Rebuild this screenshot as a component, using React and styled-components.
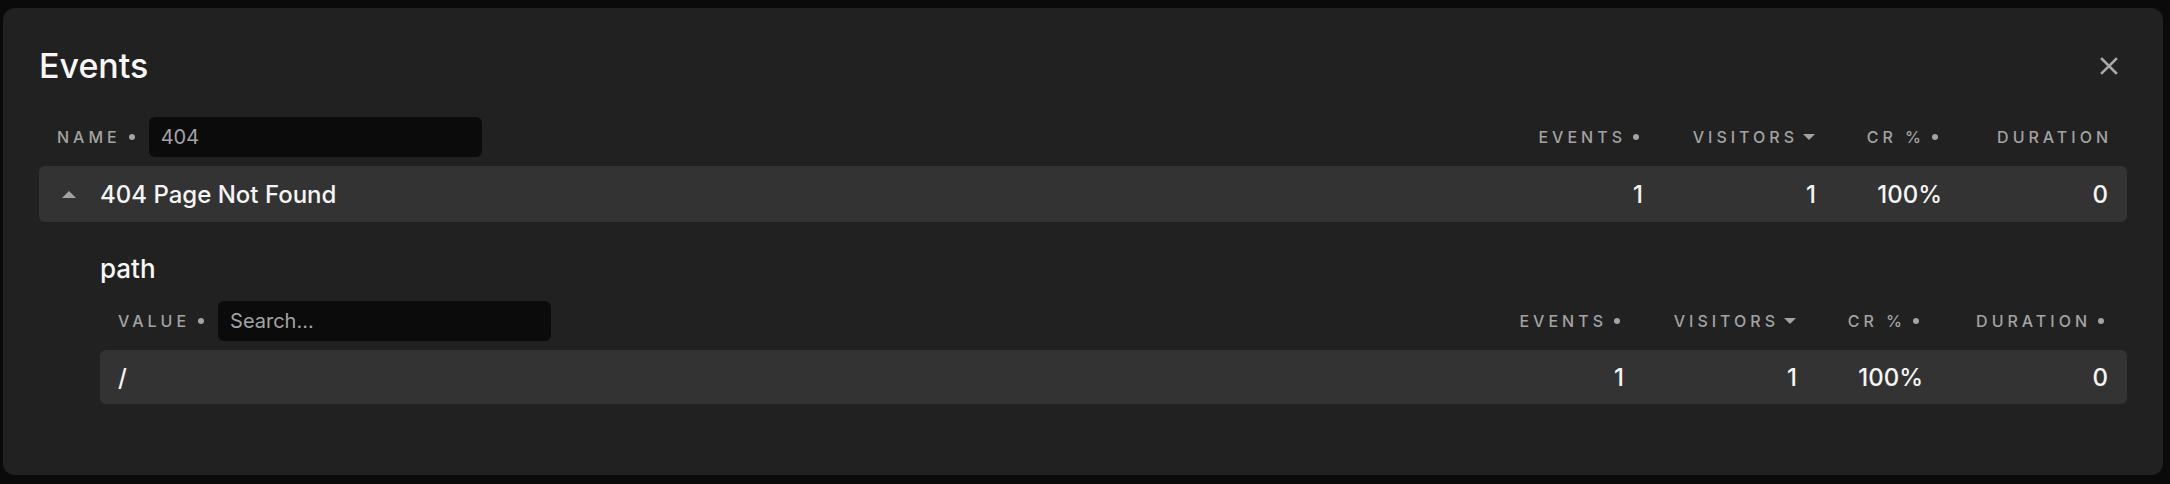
import React from "react";
import { styled, createGlobalStyle } from "styled-components";

const GlobalStyle = createGlobalStyle`
  html, body {
    margin: 0;
    background: #0a0a0a;
  }
  body {
    font-family: Inter, "Noto Sans", sans-serif;
    -webkit-font-smoothing: antialiased;
  }
`;

const TOP_COLS = "1fr 160px 173px 126px 166px";
const SUB_COLS = "1fr 160px 173px 126px 185px";

const columns = [
  { key: "events", label: "Events", mark: "dot" },
  { key: "visitors", label: "Visitors", mark: "sort" },
  { key: "cr", label: "CR %", mark: "dot" },
  { key: "duration", label: "Duration", mark: "dot" },
];

function CloseIcon() {
  return (
    <svg width="18" height="18" viewBox="0 0 18 18" fill="none">
      <path d="M2 2L16 16M16 2L2 16" stroke="currentColor" strokeWidth="2.6" strokeLinecap="square" />
    </svg>
  );
}

function SortIcon() {
  return (
    <svg width="12" height="6" viewBox="0 0 12 6">
      <polygon points="0,0 12,0 6,6" fill="currentColor" />
    </svg>
  );
}

function CaretUp() {
  return (
    <svg width="14" height="7" viewBox="0 0 14 7">
      <polygon points="0,7 14,7 7,0" fill="currentColor" />
    </svg>
  );
}

function HeadLabel({ label, mark }) {
  return (
    <HeadCell>
      <Caps>{label}</Caps>
      {mark === "dot" && <Dot />}
      {mark === "sort" && (
        <SortMark>
          <SortIcon />
        </SortMark>
      )}
    </HeadCell>
  );
}

function Table({ cols, filter, placeholder, value, rows, caret, hideLastDot }) {
  return (
    <div>
      <HeadRow $cols={cols}>
        <FilterGroup>
          <Caps>{filter}</Caps>
          <FilterDot />
          <SearchInput placeholder={placeholder} defaultValue={value} />
        </FilterGroup>
        {columns.map((c, i) => (
          <HeadLabel
            key={c.key}
            label={c.label}
            mark={hideLastDot && i === columns.length - 1 ? null : c.mark}
          />
        ))}
      </HeadRow>
      {rows.map((r) => (
        <DataRow key={r.name} $cols={cols} $caret={caret} $h={caret ? 56 : 54}>
          <NameCell>
            {caret && (
              <Caret>
                <CaretUp />
              </Caret>
            )}
            {r.name}
          </NameCell>
          <Num>{r.events}</Num>
          <Num>{r.visitors}</Num>
          <Num>{r.cr}</Num>
          <Num>{r.duration}</Num>
        </DataRow>
      ))}
    </div>
  );
}

export default function App() {
  const row = { name: "404 Page Not Found", events: 1, visitors: 1, cr: "100%", duration: 0 };
  const sub = { name: "/", events: 1, visitors: 1, cr: "100%", duration: 0 };
  return (
    <>
      <GlobalStyle />
      <Backdrop>
        <Modal>
          <TitleBar>
            <Title>Events</Title>
            <CloseButton aria-label="Close">
              <CloseIcon />
            </CloseButton>
          </TitleBar>
          <Section>
            <Table cols={TOP_COLS} filter="Name" value="404" rows={[row]} caret hideLastDot />
          </Section>
          <Breakdown>
            <BreakdownTitle>path</BreakdownTitle>
            <Table cols={SUB_COLS} filter="Value" placeholder="Search..." rows={[sub]} />
          </Breakdown>
        </Modal>
      </Backdrop>
    </>
  );
}

const Backdrop = styled.div`
  padding: 8px 7px 9px 3px;
`;

const Modal = styled.section`
  background: #212121;
  border-radius: 12px;
  padding: 38px 36px 71px;
`;

const TitleBar = styled.div`
  display: flex;
  align-items: center;
  justify-content: space-between;
  height: 40px;
`;

const Title = styled.h2`
  margin: 0;
  font-size: 34px;
  line-height: 40px;
  font-weight: 500;
  color: #f7f7f7;
`;

const CloseButton = styled.button`
  display: flex;
  background: none;
  border: 0;
  padding: 0;
  margin-right: 9px;
  color: #a8a8a8;
  cursor: pointer;
`;

const Section = styled.div`
  margin-top: 31px;
`;

const Breakdown = styled.div`
  margin: 31px 0 0 61px;
`;

const BreakdownTitle = styled.h3`
  margin: 0 0 16px;
  font-size: 26px;
  line-height: 32px;
  font-weight: 500;
  color: #f7f7f7;
`;

const HeadRow = styled.div`
  display: grid;
  grid-template-columns: ${(p) => p.$cols};
  align-items: center;
  height: 40px;
  padding: 0 19px 0 18px;
  margin-bottom: 9px;
`;

const Caps = styled.span`
  font-size: 16px;
  font-weight: 500;
  text-transform: uppercase;
  letter-spacing: 4px;
  margin-right: -4px;
  color: #a3a3a3;
`;

const HeadCell = styled.div`
  display: flex;
  align-items: center;
  justify-content: flex-end;
  white-space: nowrap;
`;

const Dot = styled.span`
  width: 6px;
  height: 6px;
  border-radius: 50%;
  background: #a3a3a3;
  margin: 0 4px 0 11px;
`;

const SortMark = styled.span`
  display: flex;
  color: #a3a3a3;
  margin: 0 1px 0 9px;
`;

const FilterGroup = styled.div`
  display: flex;
  align-items: center;
`;

const FilterDot = styled(Dot)`
  margin: 0 14px 0 12px;
`;

const SearchInput = styled.input`
  width: 333px;
  height: 40px;
  box-sizing: border-box;
  border: 0;
  border-radius: 6px;
  background: #0b0b0b;
  padding: 0 12px;
  font-family: inherit;
  font-size: 20px;
  color: #a3a3a3;
  outline: none;

  &::placeholder {
    color: #a3a3a3;
  }
`;

const DataRow = styled.div`
  display: grid;
  grid-template-columns: ${(p) => p.$cols};
  align-items: center;
  height: ${(p) => p.$h}px;
  padding: 0 19px 0 ${(p) => (p.$caret ? 23 : 18)}px;
  background: #333333;
  border-radius: 6px;
  font-size: 24px;
  font-weight: 500;
  color: #f5f5f5;
`;

const NameCell = styled.div`
  display: flex;
  align-items: center;
`;

const Caret = styled.span`
  display: flex;
  color: #a3a3a3;
  margin-right: 24px;
`;

const Num = styled.div`
  text-align: right;
`;
